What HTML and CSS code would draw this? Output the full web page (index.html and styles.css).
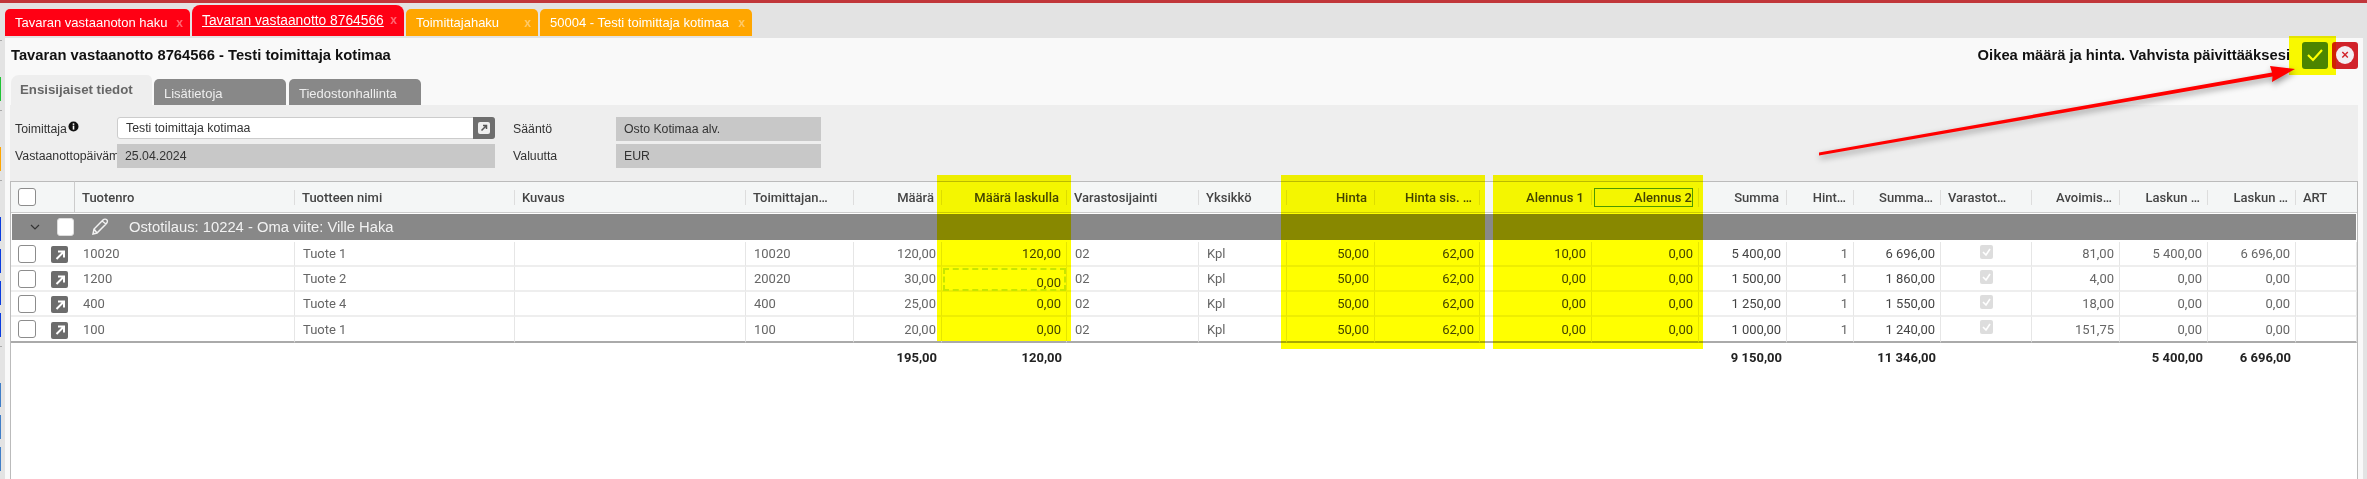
FILE: index.html
```html
<!DOCTYPE html>
<html lang="fi">
<head>
    <meta charset="UTF-8">
    <title>Tavaran vastaanotto</title>
    <link rel="stylesheet" href="styles.css">
</head>
<body>
<div class="topbar"></div>
<div class="tabs">
    <a class="tab tab-red tab-w1">Tavaran vastaanoton haku <span class="tab-x">x</span></a>
    <a class="tab tab-red tab-active tab-w2"><u>Tavaran vastaanotto 8764566</u> <span class="tab-x">x</span></a>
    <a class="tab tab-orange tab-w3">Toimittajahaku <span class="tab-x">x</span></a>
    <a class="tab tab-orange tab-w2">50004 - Testi toimittaja kotimaa <span class="tab-x">x</span></a>
</div>
<div class="main">
    <div class="rail">
        <div class="tick t1"></div>
        <div class="bar green b1"></div>
        <div class="tick t2"></div>
        <div class="bar orange b1"></div>
        <div class="tick t2"></div>
        <div class="bar blue b1"></div>
        <div class="bar blue"></div>
        <div class="bar blue"></div>
        <div class="bar blue"></div>
        <div class="tick t2"></div>
        <div class="bar steel b1"></div>
        <div class="bar steel"></div>
        <div class="bar steel"></div>
    </div>
    <div class="panel">
        <div class="title-row">
            <h1 class="title">Tavaran vastaanotto 8764566 - Testi toimittaja kotimaa</h1>
            <div class="actions">
                <span class="message">Oikea määrä ja hinta. Vahvista päivittääksesi</span>
                <button class="btn-ok">
                    <svg width="18" height="14" viewBox="0 0 18 14"><path d="M2 7l5 5 9-10" fill="none" stroke="#fff" stroke-width="2.2"/></svg>
                </button>
                <button class="btn-cancel"><span class="cancel-circle">×</span></button>
            </div>
        </div>
        <div class="subtabs">
            <div class="subtab subtab-active">Ensisijaiset tiedot</div>
            <div class="subtab subtab-1">Lisätietoja</div>
            <div class="subtab subtab-2">Tiedostonhallinta</div>
        </div>
        <div class="form">
            <label class="lbl">Toimittaja<svg class="info" width="11" height="11" viewBox="0 0 11 11"><circle cx="5.5" cy="5.5" r="5" fill="#111"/><rect x="4.7" y="4.6" width="1.6" height="4" fill="#fff"/><rect x="4.7" y="2.4" width="1.6" height="1.5" fill="#fff"/></svg></label>
            <div class="field field-edit">
                <span>Testi toimittaja kotimaa</span>
                <span class="field-btn">
                    <svg width="14" height="14" viewBox="0 0 14 14"><rect x="1" y="1" width="12" height="12" rx="2" fill="#eee"/><path d="M4.5 9.5L9.5 4.5M6 4.5h3.5V8" fill="none" stroke="#555" stroke-width="1.5"/></svg>
                </span>
            </div>
            <div></div>
            <label class="lbl">Sääntö</label>
            <div class="field field-ro">Osto Kotimaa alv.</div>

            <label class="lbl lbl-clip">Vastaanottopäivämäärä</label>
            <div class="field field-ro">25.04.2024</div>
            <div></div>
            <label class="lbl">Valuutta</label>
            <div class="field field-ro">EUR</div>
        </div>
        <div class="grid-wrap">
            <table class="grid">
                <colgroup>
                    <col class="c64"><col class="c220"><col class="c220"><col class="c231"><col class="c108"><col class="c88"><col class="c125"><col class="c132"><col class="c88"><col class="c88"><col class="c105"><col class="c112"><col class="c107"><col class="c88"><col class="c67"><col class="c87"><col class="c91"><col class="c88"><col class="c88"><col class="c88"><col class="c61">
                </colgroup>
                <thead>
                <tr>
                    <th class="th-check"><span class="check"></span></th>
                    <th><div class="hd">Tuotenro</div></th>
                    <th><div class="hd">Tuotteen nimi</div></th>
                    <th><div class="hd">Kuvaus</div></th>
                    <th><div class="hd">Toimittajan…</div></th>
                    <th><div class="hd r">Määrä</div></th>
                    <th><div class="hd r">Määrä laskulla</div></th>
                    <th><div class="hd">Varastosijainti</div></th>
                    <th><div class="hd">Yksikkö</div></th>
                    <th><div class="hd r">Hinta</div></th>
                    <th><div class="hd r">Hinta sis. …</div></th>
                    <th><div class="hd r">Alennus 1</div></th>
                    <th><div class="hd hd-sorted r"><span class="sorted">Alennus 2</span></div></th>
                    <th><div class="hd r">Summa</div></th>
                    <th><div class="hd r">Hint…</div></th>
                    <th><div class="hd r">Summa…</div></th>
                    <th><div class="hd">Varastot…</div></th>
                    <th><div class="hd r">Avoimis…</div></th>
                    <th><div class="hd r">Laskun …</div></th>
                    <th><div class="hd r">Laskun …</div></th>
                    <th><div class="hd hd-last">ART</div></th>
                </tr>
                </thead>
                <tbody>
                <tr class="group-row">
                    <td colspan="21">
                        <div class="group">
                            <svg class="chev" width="10" height="6" viewBox="0 0 10 6"><path d="M1 1l4 4 4-4" fill="none" stroke="#333" stroke-width="1.2"/></svg>
                            <span class="check check-white"></span>
                            <svg class="pencil" width="20" height="18" viewBox="0 0 20 18"><path d="M4 16l1-5L14 2c1-1 3-1 4 0s0 3-1 4l-9 9zM5 11l3 4M13 3l4 3" fill="none" stroke="#f2f2f2" stroke-width="1.5"/></svg>
                            <span class="group-text">Ostotilaus: 10224 - Oma viite: Ville Haka</span>
                        </div>
                    </td>
                </tr>
                <tr class="row">
                    <td><div class="row-tools"><span class="check"></span><span class="open"><svg width="12" height="12" viewBox="0 0 12 12"><path d="M2.5 10L9.5 3M4 2.5h6v6" fill="none" stroke="#fff" stroke-width="2"/></svg></span></div></td>
                    <td>10020</td><td>Tuote 1</td><td></td><td>10020</td><td class="r">120,00</td><td class="r dark">120,00</td><td>02</td><td>Kpl</td><td class="r dark">50,00</td><td class="r dark">62,00</td><td class="r dark">10,00</td><td class="r dark">0,00</td><td class="r dark">5 400,00</td><td class="r">1</td><td class="r dark">6 696,00</td><td><span class="ro-check"><svg width="13" height="14" viewBox="0 0 13 14"><path d="M3 7l3 3 4-6" fill="none" stroke="#fff" stroke-width="1.6"/></svg></span></td><td class="r">81,00</td><td class="r">5 400,00</td><td class="r">6 696,00</td><td></td>
                </tr>
                <tr class="row">
                    <td><div class="row-tools"><span class="check"></span><span class="open"><svg width="12" height="12" viewBox="0 0 12 12"><path d="M2.5 10L9.5 3M4 2.5h6v6" fill="none" stroke="#fff" stroke-width="2"/></svg></span></div></td>
                    <td>1200</td><td>Tuote 2</td><td></td><td>20020</td><td class="r">30,00</td><td class="r dark cell-edit">0,00</td><td>02</td><td>Kpl</td><td class="r dark">50,00</td><td class="r dark">62,00</td><td class="r dark">0,00</td><td class="r dark">0,00</td><td class="r dark">1 500,00</td><td class="r">1</td><td class="r dark">1 860,00</td><td><span class="ro-check"><svg width="13" height="14" viewBox="0 0 13 14"><path d="M3 7l3 3 4-6" fill="none" stroke="#fff" stroke-width="1.6"/></svg></span></td><td class="r">4,00</td><td class="r">0,00</td><td class="r">0,00</td><td></td>
                </tr>
                <tr class="row">
                    <td><div class="row-tools"><span class="check"></span><span class="open"><svg width="12" height="12" viewBox="0 0 12 12"><path d="M2.5 10L9.5 3M4 2.5h6v6" fill="none" stroke="#fff" stroke-width="2"/></svg></span></div></td>
                    <td>400</td><td>Tuote 4</td><td></td><td>400</td><td class="r">25,00</td><td class="r dark">0,00</td><td>02</td><td>Kpl</td><td class="r dark">50,00</td><td class="r dark">62,00</td><td class="r dark">0,00</td><td class="r dark">0,00</td><td class="r dark">1 250,00</td><td class="r">1</td><td class="r dark">1 550,00</td><td><span class="ro-check"><svg width="13" height="14" viewBox="0 0 13 14"><path d="M3 7l3 3 4-6" fill="none" stroke="#fff" stroke-width="1.6"/></svg></span></td><td class="r">18,00</td><td class="r">0,00</td><td class="r">0,00</td><td></td>
                </tr>
                <tr class="row row-last">
                    <td><div class="row-tools"><span class="check"></span><span class="open"><svg width="12" height="12" viewBox="0 0 12 12"><path d="M2.5 10L9.5 3M4 2.5h6v6" fill="none" stroke="#fff" stroke-width="2"/></svg></span></div></td>
                    <td>100</td><td>Tuote 1</td><td></td><td>100</td><td class="r">20,00</td><td class="r dark">0,00</td><td>02</td><td>Kpl</td><td class="r dark">50,00</td><td class="r dark">62,00</td><td class="r dark">0,00</td><td class="r dark">0,00</td><td class="r dark">1 000,00</td><td class="r">1</td><td class="r dark">1 240,00</td><td><span class="ro-check"><svg width="13" height="14" viewBox="0 0 13 14"><path d="M3 7l3 3 4-6" fill="none" stroke="#fff" stroke-width="1.6"/></svg></span></td><td class="r">151,75</td><td class="r">0,00</td><td class="r">0,00</td><td></td>
                </tr>
                </tbody>
                <tfoot>
                <tr>
                    <td colspan="5"></td><td class="r">195,00</td><td class="r">120,00</td><td colspan="6"></td><td class="r">9 150,00</td><td></td><td class="r">11 346,00</td><td colspan="2"></td><td class="r">5 400,00</td><td class="r">6 696,00</td><td></td>
                </tr>
                </tfoot>
            </table>
        </div>
    </div>
    <div class="right-gap"></div>
</div>

<!-- yellow marker and arrow drawn over the screenshot -->
<div class="mark mark-qty"></div>
<div class="mark mark-price"></div>
<div class="mark mark-disc"></div>
<div class="mark mark-ok"></div>
<svg class="arrow" width="2367" height="479" viewBox="0 0 2367 479">
    <path d="M1819 152.5L2272 72.5L2270 66L2295 69L2272 82L2272.500 76.500L1819 155.500Z" fill="#f00"/>
</svg>
</body>
</html>
```

FILE: styles.css
```css
html, body {
    height: 100%;
}

body {
    margin: 0;
    display: flex;
    flex-direction: column;
    overflow: hidden;
    background-color: #e3e3e3;
    font-family: "Liberation Sans", Arial, sans-serif;
    font-size: 13px;
    color: #333;
}

.topbar {
    height: 3px;
    background-color: #c1363a;
}

/* main tabs */
.tabs {
    display: flex;
    align-items: flex-end;
    gap: 2px;
    height: 33px;
    padding-left: 5px;
    margin-bottom: 2px;
}

.tab {
    box-sizing: border-box;
    display: flex;
    justify-content: space-between;
    align-items: center;
    height: 27px;
    padding: 0 7px 0 10px;
    border-radius: 5px 5px 0 0;
    color: #fff;
    font-size: 13px;
    white-space: nowrap;
}

.tab-red { background-color: #ff0014; }
.tab-orange { background-color: #ffa600; }
.tab-active { height: 31px; padding-bottom: 1px; border-radius: 8px 8px 0 0; font-size: 13.8px; }
.tab-w1 { width: 185px; }
.tab-w2 { width: 212px; }
.tab-w3 { width: 132px; }

.tab-x {
    color: rgba(255, 255, 255, 0.4);
    font-size: 12px;
    font-weight: bold;
}

.main {
    flex: 1;
    display: flex;
    min-height: 0;
}

/* left edge of the sidebar, mostly cut off */
.rail {
    width: 5px;
    flex-shrink: 0;
    display: flex;
    flex-direction: column;
    align-items: flex-start;
}

.tick { width: 2px; height: 1px; background-color: #aaa; }
.t1 { margin-top: 2px; }
.t2 { margin-top: 9px; }
.bar { width: 1px; height: 24px; margin-top: 8px; }
.b1 { margin-top: 36px; }
.green { background-color: #1fc435; }
.orange { background-color: #ffa600; }
.blue { background-color: #0a3ce0; }
.steel { background-color: #3f7ec8; }

.panel {
    flex: 1;
    min-width: 0;
    display: flex;
    flex-direction: column;
    padding: 0 5px;
    background-color: #f9f9f9;
}

.right-gap {
    width: 4px;
    flex-shrink: 0;
}

.title-row {
    box-sizing: border-box;
    display: flex;
    justify-content: space-between;
    align-items: center;
    height: 37px;
    padding-bottom: 3px;
}

.title {
    margin: 0 0 0 1px;
    font-size: 14.75px;
    font-weight: bold;
    color: #111;
}

.actions {
    display: flex;
    align-items: center;
}

.message {
    margin-right: 12px;
    font-size: 14.75px;
    font-weight: bold;
    color: #111;
}

.btn-ok, .btn-cancel {
    display: flex;
    align-items: center;
    justify-content: center;
    width: 26px;
    height: 27px;
    padding: 0;
    border: 0;
    border-radius: 3px;
}

.btn-ok { background-color: #4c8500; }
.btn-cancel { background-color: #d1222a; margin-left: 4px; }

.cancel-circle {
    display: block;
    width: 18px;
    height: 18px;
    border-radius: 50%;
    background-color: #f3eef3;
    color: #d1222a;
    font-size: 13px;
    font-weight: bold;
    line-height: 17px;
    text-align: center;
}

/* sub tabs */
.subtabs {
    display: flex;
    align-items: flex-end;
    height: 30px;
    padding-left: 1px;
}

.subtab {
    box-sizing: border-box;
    height: 26px;
    margin-right: 3px;
    padding-top: 7px;
    border-radius: 5px 5px 0 0;
    background-color: #888;
    color: #eee;
    font-size: 13px;
}

.subtab-active {
    width: 141px;
    height: 30px;
    margin-right: 2px;
    padding: 7px 0 0 9px;
    background-color: #eee;
    color: #666;
    font-size: 13.25px;
    font-weight: bold;
    border-radius: 8px 5px 0 0;
}

.subtab-1 { width: 132px; padding-left: 10px; }
.subtab-2 { width: 132px; padding-left: 10px; }

/* form */
.form {
    box-sizing: border-box;
    display: grid;
    grid-template-columns: 102px 378px 18px 103px 205px;
    grid-template-rows: 24px 24px;
    row-gap: 3px;
    height: 76px;
    padding: 12px 0 0 5px;
    background-color: #eee;
}

.lbl {
    display: flex;
    align-items: center;
    color: #333;
    font-size: 12.3px;
    white-space: nowrap;
}

.lbl-clip {
    overflow: hidden;
}

.info {
    margin: -5px 0 0 1px;
}

.field {
    box-sizing: border-box;
    display: flex;
    align-items: center;
    padding-left: 8px;
    font-size: 12.3px;
    color: #333;
}

.field-ro {
    background-color: #c8c8c8;
}

.field-edit {
    justify-content: space-between;
    height: 22px;
    background-color: #fff;
    border: 1px solid #ccc;
    border-radius: 3px;
}

.field-btn {
    display: flex;
    align-items: center;
    justify-content: center;
    width: 22px;
    height: 22px;
    margin-right: -1px;
    background-color: #6e6e6e;
    border-radius: 0 3px 3px 0;
}

/* grid */
.grid-wrap {
    flex: 1;
    background-color: #fff;
    border-left: 1px solid #bbb;
    border-right: 1px solid #bbb;
}

.grid {
    width: 2346px;
    table-layout: fixed;
    border-collapse: separate;
    border-spacing: 0;
    font-family: Roboto, sans-serif;
    font-size: 13px;
}

.c64 { width: 64px; }
.c220 { width: 220px; }
.c231 { width: 231px; }
.c108 { width: 108px; }
.c88 { width: 88px; }
.c125 { width: 125px; }
.c132 { width: 132px; }
.c105 { width: 105px; }
.c112 { width: 112px; }
.c107 { width: 107px; }
.c67 { width: 67px; }
.c87 { width: 87px; }
.c91 { width: 91px; }
.c61 { width: 61px; }

.grid th {
    height: 30px;
    padding: 0;
    background-color: #f4f6f6;
    border-top: 1px solid #bbb;
    border-bottom: 1px solid #ccc;
    font-weight: 500;
    color: #444;
    text-align: left;
}

.th-check {
    border-right: 1px solid #ccc;
}

.th-check .check {
    margin-left: 7px;
}

.hd {
    box-sizing: border-box;
    height: 15px;
    padding: 0 7px;
    border-right: 1px solid #ddd;
    line-height: 15px;
    white-space: nowrap;
    overflow: hidden;
}

.hd.r {
    text-align: right;
}

.hd-last {
    border-right: 0;
}

.hd-sorted {
    height: 19px;
    padding: 0 5px 0 0;
}

.sorted {
    box-sizing: border-box;
    display: inline-block;
    width: 99px;
    height: 19px;
    border: 1px solid #4d9a3c;
    line-height: 17px;
}

.check {
    box-sizing: border-box;
    display: block;
    width: 18px;
    height: 18px;
    background-color: #fff;
    border: 1px solid #8c8c8c;
    border-radius: 3px;
}

.check-white {
    width: 17px;
    border-color: #ddd;
}

.group-row td {
    padding: 1px 1px 2px 1px;
}

.group {
    display: flex;
    align-items: center;
    height: 26px;
    background-color: #888;
    color: #fff;
    font-family: "Liberation Sans", Arial, sans-serif;
    font-size: 14.75px;
}

.chev { margin-left: 18px; }
.group .check { margin-left: 17px; }
.pencil { margin-left: 15px; }
.group-text { margin-left: 20px; color: #f2f2f2; }

.row td {
    height: 23px;
    padding: 0 5px 0 8px;
    border-right: 1px solid #e6e6e6;
    border-bottom: 2px solid #eee;
    color: #666;
    white-space: nowrap;
}

.row td:first-child {
    padding: 0;
    border-right: 0;
}

.row-last td {
    height: 24px;
    border-bottom: 2px solid #aaa;
}

.row-tools {
    display: flex;
    align-items: center;
    padding-left: 7px;
}

.open {
    display: flex;
    align-items: center;
    justify-content: center;
    width: 17px;
    height: 17px;
    margin: 2px 0 0 15px;
    background-color: #6c6c6c;
    border-radius: 2px;
}

.grid .r {
    text-align: right;
}

.grid .dark {
    color: #444;
}

.cell-edit {
    outline: 2px dashed #c8e6a0;
    outline-offset: -3px;
    vertical-align: bottom;
}

.ro-check {
    display: block;
    width: 13px;
    height: 14px;
    margin: -4px 0 0 31px;
    background-color: #ddd;
    border-radius: 2px;
}

.ro-check svg {
    display: block;
}

.grid tfoot td {
    height: 29px;
    padding: 0 5px 0 0;
    font-weight: bold;
    color: #222;
}

/* highlighter on top of the page */
.mark {
    position: absolute;
    background-color: #ff0;
    mix-blend-mode: multiply;
}

.mark-qty { left: 937px; top: 175px; width: 134px; height: 166px; }
.mark-price { left: 1281px; top: 175px; width: 204px; height: 174px; }
.mark-disc { left: 1493px; top: 175px; width: 210px; height: 174px; }
.mark-ok { left: 2289px; top: 36px; width: 47px; height: 39px; }

.arrow {
    position: absolute;
    left: 0;
    top: 0;
    filter: drop-shadow(1px 3px 3px rgba(0, 0, 0, 0.4));
}
```
